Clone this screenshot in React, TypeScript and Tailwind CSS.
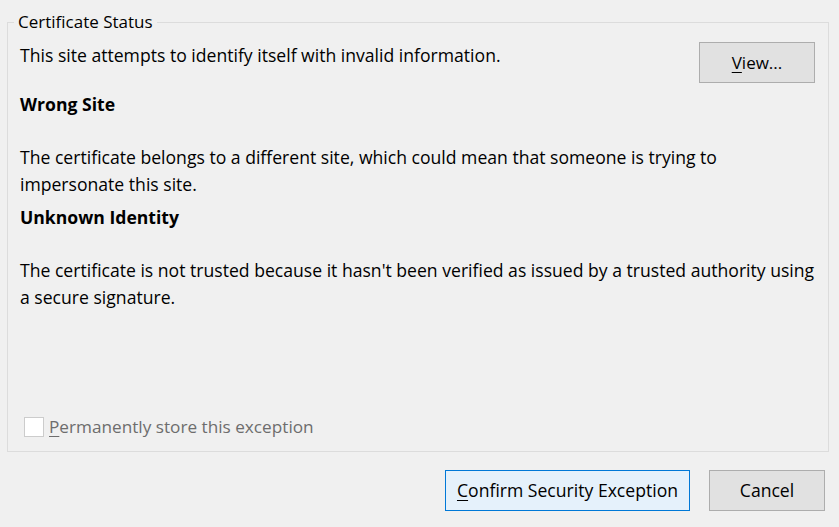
export default function App() {
  return (
    <div
      className="w-[839px] h-[527px] bg-[#f0f0f0] text-black text-[17.6px] overflow-hidden"
      style={{ fontFamily: '"Open Sans", "Noto Sans", sans-serif' }}
    >
      <div className="pt-[12px] px-[7px]">
        <fieldset className="border border-[#dcdcdc] h-[440px] w-[822px] px-[12px] m-0 flex flex-col">
          <legend className="ml-[-6px] px-[4px] leading-[20px] text-[17px]">Certificate Status</legend>
          <div className="flex justify-between items-start">
            <div>
              <p className="leading-[24px] mt-[11px]">This site attempts to identify itself with invalid information.</p>
              <p className="font-bold leading-[24px] mt-[25px]">Wrong Site</p>
            </div>
            <button className="w-[116px] h-[41px] mt-[10px] mr-[1px] border border-[#adadad] bg-[#e1e1e1] text-[17px]">
              <span className="underline underline-offset-[3px]">V</span>iew...
            </button>
          </div>
          <p className="leading-[27px] mt-[28px]">
            The certificate belongs to a different site, which could mean that someone is trying to
            <br />
            impersonate this site.
          </p>
          <p className="font-bold leading-[24px] mt-[7px]">Unknown Identity</p>
          <p className="leading-[27px] mt-[28px]">
            The certificate is not trusted because it hasn't been verified as issued by a trusted authority using
            <br />
            a secure signature.
          </p>
          <div className="flex-1" />
          <label className="flex items-center gap-[5px] mb-[11px] ml-[4px] text-[#6d6d6d] text-[17.2px]">
            <span className="w-[20px] h-[20px] border border-[#cccccc] bg-white" />
            <span>
              <span className="underline underline-offset-[3px]">P</span>ermanently store this exception
            </span>
          </label>
        </fieldset>
      </div>
      <div className="flex justify-end gap-[19px] pr-[14px] mt-[18px] text-[17.6px]">
        <button className="w-[245px] h-[41px] border border-[#0078d7] bg-[#e5f1fb]">
          <span className="underline underline-offset-[3px]">C</span>onfirm Security Exception
        </button>
        <button className="w-[116px] h-[41px] border border-[#adadad] bg-[#e1e1e1]">Cancel</button>
      </div>
    </div>
  );
}
